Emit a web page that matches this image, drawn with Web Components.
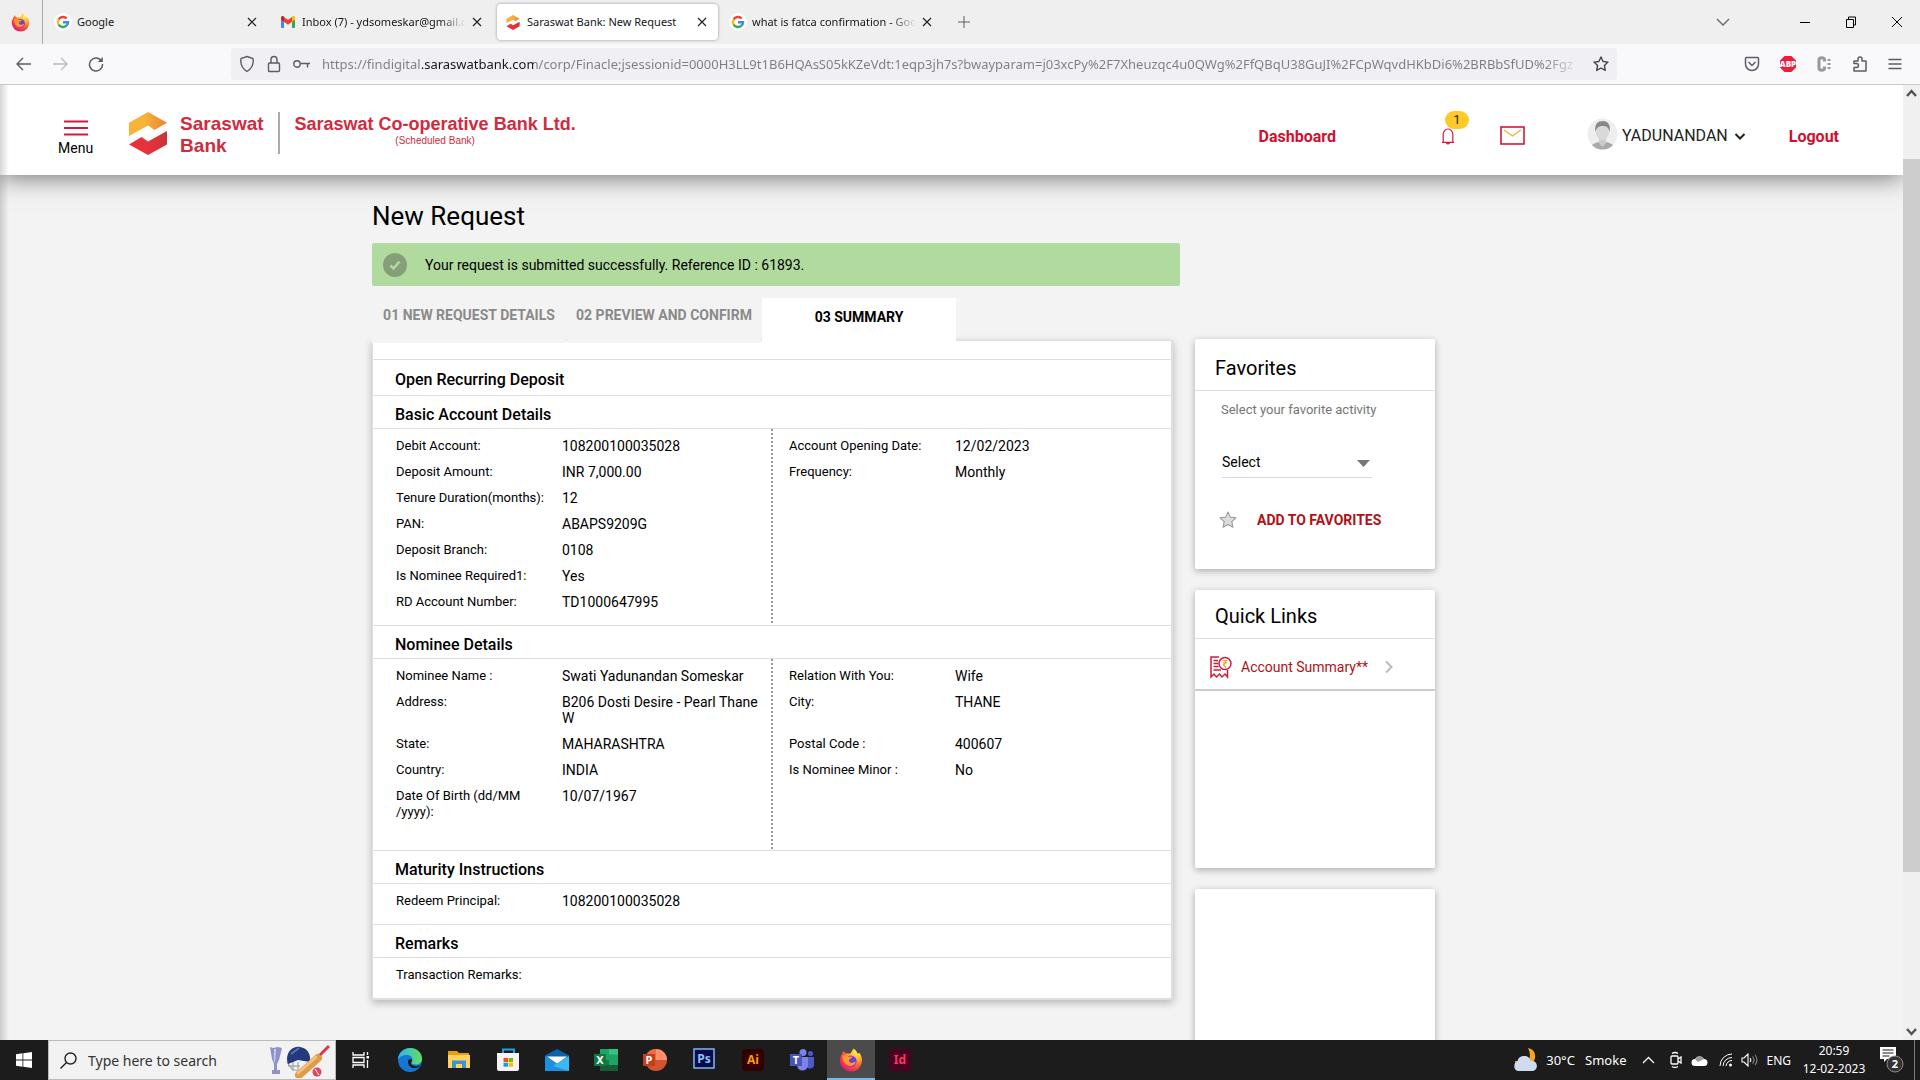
<!DOCTYPE html>
<html lang="en">
<head>
<meta charset="utf-8">
<title>Saraswat Bank: New Request</title>
<style>
html,body{height:100%}
body{margin:0;overflow:hidden;font-family:Roboto,"Liberation Sans",sans-serif;color:#000;background:#f3f3f3}
</style>
</head>
<body>
<desktop-shell>
  <browser-chrome slot="top"></browser-chrome>
  <web-page slot="page">
    <site-header></site-header>
    <request-page></request-page>
  </web-page>
  <task-bar slot="bottom"></task-bar>
</desktop-shell>

<script>
const define = (name, markup) => {
  const tpl = document.createElement('template');
  tpl.innerHTML = '<style>:host,*{box-sizing:border-box}button,input,select{font:inherit;color:inherit;background:none;border:0;margin:0;padding:0;outline:0}button{display:flex;align-items:center;justify-content:center;flex:none}svg{display:block;flex:none}a{text-decoration:none;color:inherit}</style>' + markup;
  customElements.define(name, class extends HTMLElement {
    constructor() {
      super();
      this.attachShadow({ mode: 'open' }).append(tpl.content.cloneNode(true));
    }
  });
};

const firefox = s => `<svg width="${s}" height="${s}" viewBox="0 0 24 24"><defs><radialGradient id="fa" cx=".75" cy=".15" r=".95"><stop offset="0" stop-color="#fff44f"/><stop offset=".35" stop-color="#ffb02e"/><stop offset=".65" stop-color="#ff5634"/><stop offset="1" stop-color="#e3117b"/></radialGradient></defs><path fill="url(#fa)" d="M14.500 0.500c2.500 1.500 3.500 3.500 4 5.200l1.700-1c1.800 2 2.800 4.600 2.800 7.600a11 11 0 0 1-22 .4C1 9.500 2 6.800 3.600 5L4 2.800l2.800 2.600c1.700-.4 3.200-.1 4.400.4 1-1.800 2.300-3.500 3.300-5.300z"/><circle cx="12" cy="13.200" r="5.600" fill="#7a3bd6"/><path fill="#ff9a2b" d="M3.500 8c2.500-1.400 5-.6 6.200.8l4-.3c-.5 1.900-2.700 1.900-3.600 3.200-.6 2 1 3.400 3 3.200 1.600-.2 2.300-1.300 3.700-1-1 3-4 4.600-7 3.900-3.800-.9-6-5-6.300-9.800z"/></svg>`;
const google = `<svg width="18" height="18" viewBox="0 0 18 18"><circle cx="9" cy="9" r="9" fill="#fff"/><g fill="none" stroke-width="2.400"><path stroke="#ea4335" d="M4.600 6.500A5 5 0 0 1 12.600 5.500"/><path stroke="#fbbc05" d="M4.600 11.500A5 5 0 0 1 4.600 6.500"/><path stroke="#34a853" d="M12.400 12.700A5 5 0 0 1 4.600 11.500"/><path stroke="#4285f4" d="M9 9.200h5A5 5 0 0 1 12.400 12.700"/></g></svg>`;
const gmail = `<svg width="18" height="18" viewBox="0 0 18 18"><path fill="#4285f4" d="M2 4.500l3 2.300V15H3a1 1 0 0 1-1-1z"/><path fill="#34a853" d="M16 4.500l-3 2.300V15h2a1 1 0 0 0 1-1z"/><path fill="#ea4335" d="M5 4l4 3 4-3v4.800l-4 3-4-3z"/><path fill="#c5221f" d="M2 5c0-2 1.800-2.500 3-1.400v5.200L2 6.600z"/><path fill="#fbbc04" d="M16 5c0-2-1.800-2.500-3-1.400v5.200l3-2.200z"/></svg>`;
const hex = (w, h) => `<svg width="${w}" height="${h}" viewBox="0 0 38 43"><defs><linearGradient id="hy"><stop offset=".4" stop-color="#f8b43a"/><stop offset="1" stop-color="#ee7f35"/></linearGradient><linearGradient id="hr"><stop offset=".5" stop-color="#e8313b"/><stop offset="1" stop-color="#c5353d"/></linearGradient></defs><path fill="url(#hy)" d="M19 0l19 10.800L25.500 18l-6.500-4.500L0 24V10.800z"/><path fill="url(#hr)" d="M0 32.500L12.500 25l6.500 4.500L38 19v13.500L19 43z"/></svg>`;

define('desktop-shell', `<style>
:host{display:flex;flex-direction:column;height:100vh}
.mid{flex:1;min-height:0;display:flex}
::slotted(web-page){flex:1;min-width:0}
</style><slot name="top"></slot><div class="mid"><slot name="page"></slot><page-scrollbar></page-scrollbar></div><slot name="bottom"></slot>`);

define('page-scrollbar', `<style>
:host{display:flex;flex-direction:column;width:17px;background:#f0f0f0}
svg{margin:4px auto}
.thumb{flex:712;background:#cdcdcd}.a{flex:57}.b{flex:151}
</style><svg width="11" height="9" viewBox="0 0 11 9"><path d="M1 7l4.500-5L10 7" fill="none" stroke="#555" stroke-width="2.500"/></svg>
<div class="a"></div><div class="thumb"></div><div class="b"></div>
<svg width="11" height="9" viewBox="0 0 11 9"><path d="M1 2l4.500 5L10 2" fill="none" stroke="#555" stroke-width="2.500"/></svg>`);

define('browser-tab', `<style>
:host{display:flex;align-items:center;width:225px;height:36px;padding:0 12px 0 9px;gap:5px;font-size:11px;line-height:18px}
:host([active]){width:221px;margin:0 2px;padding:0 10px 0 7px;background:#fff;border-radius:4px;box-shadow:0 0 3px rgba(0,0,0,.4)}
.t{flex:1;min-width:0;white-space:nowrap;overflow:hidden}
:host([long]) .t{-webkit-mask:linear-gradient(90deg,#000 84%,transparent)}
</style><slot name="icon"></slot><span class="t"><slot></slot></span><button aria-label="Close tab"><svg width="12" height="12" viewBox="0 0 12 12"><path d="M2 2l8 8M10 2l-8 8" stroke="#222" stroke-width="1.200"/></svg></button>`);

define('browser-chrome', `<style>
:host{display:block;font-family:"Noto Sans","Open Sans",sans-serif;color:#15141a}
.strip{display:flex;align-items:center;height:44px;background:#efefef;padding-right:16px}
.home{width:43px;height:44px;border-right:1px solid #aaa;margin-right:2px;padding-right:2px;display:flex;align-items:center;justify-content:center}
.plus{width:24px;height:24px;margin-left:7px}
.win{margin-left:auto;display:flex;align-items:center;gap:32px}
.bar{display:flex;align-items:center;height:41px;background:#f9f9fb;border-bottom:1px solid #c8c8cc;padding:0 17px 0 16px}
.nav{display:flex;gap:20px;width:215px}
.url{display:flex;align-items:center;flex:1;max-width:1386px;height:32px;background:#f0f0f4;border-radius:4px;padding:0 8px;gap:12px}
.url input{flex:1;min-width:0;font-size:13px;height:24px;color:transparent;background:linear-gradient(90deg,#7c7c84 100px,#15141a 100px 212px,#7c7c84 212px);-webkit-background-clip:text;background-clip:text;-webkit-mask:linear-gradient(90deg,#000 97%,transparent)}
.ext{margin-left:auto;display:flex;gap:18px;align-items:center}
i{display:block;width:18px;height:18px}
</style>
<div class="strip"><div class="home">${firefox(19)}</div>
<browser-tab><i slot="icon">${google}</i>Google</browser-tab>
<browser-tab long><i slot="icon">${gmail}</i>Inbox (7) - ydsomeskar@gmail.c</browser-tab>
<browser-tab active><i slot="icon" style="display:grid;place-items:center">${hex(14, 15)}</i>Saraswat Bank: New Request</browser-tab>
<browser-tab long><i slot="icon">${google}</i>what is fatca confirmation - Goo</browser-tab>
<button class="plus" aria-label="New tab"><svg width="12" height="12"><path d="M6 0v12M0 6h12" stroke="#5b5b66"/></svg></button>
<div class="win">
<button aria-label="List tabs" style="margin-right:36px"><svg width="14" height="14" viewBox="0 0 14 14"><path d="M1 4l6 6 6-6" fill="none" stroke="#666" stroke-width="1.300"/></svg></button>
<button aria-label="Minimise"><svg width="14" height="14"><path d="M2 7.500h10" stroke="#000"/></svg></button>
<button aria-label="Restore"><svg width="14" height="14"><path d="M2.500 4.500h7v8h-7zM4.500 4v-2h7v8h-2" fill="none" stroke="#000"/></svg></button>
<button aria-label="Close"><svg width="14" height="14"><path d="M2 2l10 10M12 2L2 12" stroke="#000"/></svg></button></div></div>
<div class="bar"><div class="nav">
<button aria-label="Back"><svg width="16" height="16" viewBox="0 0 16 16" fill="none" stroke="#5b5b66" stroke-width="1.400"><path d="M15 8H1.500M7 2L1 8l6 6"/></svg></button>
<button aria-label="Forward"><svg width="16" height="16" viewBox="0 0 16 16" fill="none" stroke="#bbb" stroke-width="1.400"><path d="M1 8h13.500M9 2l6 6-6 6"/></svg></button>
<button aria-label="Reload"><svg width="16" height="16" viewBox="0 0 16 16" fill="none" stroke="#5b5b66" stroke-width="1.500"><path d="M13.500 5A6.500 6.500 0 1 0 14.500 8"/><path d="M14.800 1v5h-5z" fill="#5b5b66" stroke="none"/></svg></button></div>
<div class="url">
<svg width="16" height="18" viewBox="0 0 16 18" fill="none" stroke="#5b5b66" stroke-width="1.400"><path d="M8 1.500l6 2c.8 5-1 10-6 13-5-3-6.800-8-6-13z"/></svg>
<svg width="14" height="18" viewBox="0 0 14 18" fill="none" stroke="#5b5b66" stroke-width="1.400"><rect x="1.500" y="8" width="11" height="8.500" rx="1"/><path d="M4 8V4.500a3 3 0 0 1 6 0V8"/></svg>
<svg width="17" height="16" viewBox="0 0 17 16" fill="none" stroke="#5b5b66" stroke-width="1.400"><circle cx="4" cy="8" r="3.200"/><path d="M7.500 7.500H17M14.500 7.500v4"/></svg>
<input aria-label="Address" value="https://findigital.saraswatbank.com/corp/Finacle;jsessionid=0000H3LL9t1B6HQAsS05kKZeVdt:1eqp3jh7s?bwayparam=j03xcPy%2F7Xheuzqc4u0QWg%2FfQBqU38GuJI%2FCpWqvdHKbDi6%2BRBbSfUD%2Fgz">
<svg width="16" height="16" viewBox="0 0 16 16" fill="none" stroke="#444" stroke-width="1.400" stroke-linejoin="round"><path d="M8 1l2.100 4.500 4.900.600-3.600 3.400.900 4.900L8 12l-4.300 2.400.900-4.900L1 6.100l4.900-.600z"/></svg></div>
<div class="ext">
<svg width="18" height="18" viewBox="0 0 18 18" fill="none" stroke="#5b5b66" stroke-width="1.500"><path d="M3.500 2.500h11a1 1 0 0 1 1 1V9a6.500 6.500 0 0 1-13 0V3.500a1 1 0 0 1 1-1zM5.500 7L9 10.500 12.500 7"/></svg>
<svg width="18" height="18" viewBox="0 0 18 18"><path fill="#f01c3c" d="M5.600 1h6.800L17 5.600v6.800L12.400 17H5.600L1 12.400V5.600z"/><text x="9" y="12" font-size="8" font-weight="800" text-anchor="middle" fill="#fff" font-family="Open Sans">ABP</text></svg>
<svg width="18" height="18" viewBox="0 0 18 18" fill="none" stroke="#999"><path stroke-width="3" d="M9.500 6.500V5C9.500 2 4 2 4 5v8C4 16 9.500 16 9.500 13v-1.500"/><path stroke-width="3" stroke-dasharray="2 2" d="M14 4v10"/></svg>
<svg width="18" height="18" viewBox="0 0 18 18" fill="none" stroke="#5b5b66" stroke-width="1.500"><path d="M3 6h4V4a2 2 0 0 1 4 0v2h4v10H3v-3.500h2.500a2 2 0 0 0 0-4H3z" stroke-linejoin="round"/></svg>
<svg width="16" height="16" viewBox="0 0 16 16"><path d="M1.500 3.500h13M1.500 8h13M1.500 12.500h13" stroke="#5b5b66" stroke-width="1.500"/></svg>
</div></div>`);

define('web-page', `<style>
:host{display:block;position:relative;overflow:hidden;background:#f3f3f3}
:host::after{content:"";position:absolute;z-index:5;inset:0 auto 0 0;width:9px;background:linear-gradient(90deg,rgba(0,0,0,.16),transparent)}
</style><slot></slot>`);

define('site-header', `<style>
:host{display:flex;align-items:center;height:90px;background:#fff;position:relative;z-index:2;box-shadow:0 2px 24px rgba(0,0,0,.55);padding:6px 64px 0 58px;font-size:16px;line-height:20px}
.menu{flex-direction:column;font-size:14px;line-height:18px;gap:3px;margin:10px 36px 0 0}
.logo{display:flex;align-items:center;gap:13px;font:bold 19px/22px "Liberation Sans",sans-serif;color:#d12b3e}
.logo div{padding:4px 14px 0 0;border-right:2px solid #aaa;height:42px;display:flex;align-items:center}
.full{font:bold 18px/22px "Liberation Sans",sans-serif;color:#d12b3e;margin-left:15px;text-align:center;padding-bottom:6px}
.full small{display:block;font-size:10px;line-height:12px;font-weight:normal}
nav{margin:8px 0 0 auto;display:flex;align-items:center;color:#d01030;font-weight:700}
.bell{position:relative;margin:-2px 45px 0 105px}
.bell span{position:absolute;left:4px;top:-16px;width:24px;height:18px;border-radius:9px;background:#ffc928;color:#222;font-size:13px;line-height:18px;text-align:center;font-weight:400}
.mail{margin-top:-4px}
.user{margin:-2px 43px 0 62px;color:#222;font-weight:400;gap:4px}
.user svg:first-child{margin-top:-4px}
.user svg:last-child{margin-left:2px}
</style>
<button class="menu"><svg width="24" height="16"><path d="M0 1.500h24M0 8h24M0 14.500h24" stroke="#d5173a" stroke-width="2"/></svg>Menu</button>
<div class="logo">${hex(38, 43)}<div>Saraswat<br>Bank</div></div>
<div class="full">Saraswat Co-operative Bank Ltd.<small>(Scheduled Bank)</small></div>
<nav><a href="#dashboard">Dashboard</a>
<button class="bell" aria-label="Notifications"><svg width="14" height="18" viewBox="0 0 14 18" fill="none" stroke="#d5173a" stroke-width="1.200"><path d="M1 15.400h12M2.200 15V7.500a4.800 5.500 0 0 1 9.600 0V15M5.500 16a1.600 1.300 0 0 0 3 0"/></svg><span>1</span></button>
<button class="mail" aria-label="Mail"><svg width="25" height="19" viewBox="0 0 25 19" fill="none"><rect x="1" y="1" width="23" height="17" stroke="#d5173a" stroke-width="1.600"/><path d="M4 4l8.500 6L21 4" stroke="#f5b335" stroke-width="1.400"/></svg></button>
<button class="user"><svg width="31" height="32" viewBox="0 0 31 32"><defs><clipPath id="av"><ellipse cx="15.500" cy="16" rx="15" ry="15.500"/></clipPath></defs><g clip-path="url(#av)"><path fill="#eee" d="M0 0h31v32H0z"/><path fill="#a9a9a9" d="M3 32c0-5 4-7 9-8h7c5 1 9 3 9 8z"/><path fill="#ccc" d="M12 19h7v6l-3.500 4-3.500-4z"/><ellipse cx="15.500" cy="14" rx="6.500" ry="8" fill="#d9d9d9"/><path fill="#888" d="M8.500 14C7 6 11 3 16 3s8 4 6.500 11c-1-5-3-6-7-6s-6 2-7 6z"/></g></svg>YADUNANDAN<svg width="12" height="12" viewBox="0 0 12 12"><path d="M1.500 4L6 8.500 10.500 4" fill="none" stroke="#222" stroke-width="2"/></svg></button>
<a href="#logout">Logout</a></nav>`);

define('detail-row', `<style>
:host{display:grid;grid-template-columns:1fr 1fr;font-size:14px;line-height:16px}
div{display:grid;grid-template-columns:166px 1fr;padding:5px 8px 5px 23px;min-height:26px}
div+div{padding-left:17px}
.l{font-size:13px;padding-right:35px}
</style><div><span class="l"><slot name="l"></slot></span><span><slot name="v"></slot></span></div>
<div><span class="l"><slot name="l2"></slot></span><span><slot name="v2"></slot></span></div>`);

define('detail-section', `<style>
:host{display:block}
h2{margin:0;padding:9px 22px 0;height:33px;border-bottom:1px solid #dedede;font-size:16px;line-height:20px;font-weight:500}
.b{padding:4px 0 10px;border-bottom:1px solid #dedede}
:host([tall]) .b{padding-bottom:25px}
:host([last]) .b{border:0}
:host([split]) .b{background:linear-gradient(#999 50%,transparent 50%) 50% 0/2px 4px repeat-y}
:host([bare]) .b{display:none}
:host([bare]) h2{height:36px;padding-top:10px}
</style><h2><slot name="title"></slot></h2><div class="b"><slot></slot></div>`);

define('side-card', `<style>
:host{display:block;background:#fff;border-radius:2px;box-shadow:0 2px 7px rgba(0,0,0,.3)}
h2{margin:0;padding:15px 20px 0;height:52px;border-bottom:1px solid #dedede;font-size:20px;line-height:28px;font-weight:400}
:host([compact]) h2{height:49px;padding-top:12px}
:host([blank]) h2{display:none}
</style><h2><slot name="title"></slot></h2><slot></slot>`);

define('step-tabs', `<style>
:host{display:flex;gap:1px;margin-bottom:-3px;position:relative;z-index:1;font-size:14px;line-height:20px;font-weight:700;color:#8a8a8a}
a{width:194px;height:45px;padding-top:7px;text-align:center;background:#f3f3f3}
a:last-child{background:#fff;color:#000;padding-top:9px}
</style><a href="#1">01 NEW REQUEST DETAILS</a><a href="#2">02 PREVIEW AND CONFIRM</a><a href="#3">03 SUMMARY</a>`);

const row = (l, v = '', l2 = '', v2 = '') => `<detail-row><span slot="l">${l}</span><span slot="v">${v}</span>${l2 ? `<span slot="l2" style="white-space:nowrap">${l2}</span><span slot="v2">${v2}</span>` : ''}</detail-row>`;

define('request-page', `<style>
:host{display:block;max-width:1159px;margin:0 auto;padding-top:24px}
h1{margin:0 0 10px;font-size:26px;line-height:34px;font-weight:400}
.ok{display:flex;align-items:center;gap:18px;max-width:808px;height:43px;margin-bottom:12px;padding-left:11px;background:#b1da9f;border-radius:2px;font-size:14px}
.cols{display:grid;grid-template-columns:801px 240px;gap:22px;align-items:start}
.panel{background:#fff;border:solid #dedede;border-width:1px 2px 2px 1px;box-shadow:0 3px 8px rgba(0,0,0,.25)}
.gap{height:19px;border-bottom:1px solid #dedede}
aside{display:flex;flex-direction:column;gap:21px;padding-top:41px}
.fav{height:178px;padding:11px 25px 0 26px}
label{display:block;font-size:13px;line-height:16px;color:#757575;margin-bottom:31px}
.sel{display:grid;width:151px}
.sel>*{grid-area:1/1}
.sel svg{justify-self:end;align-self:center;margin-right:2px;pointer-events:none}
select{appearance:none;display:block;width:150px;height:29px;margin-left:1px;padding-bottom:2px;border-bottom:1px solid #d8d8d8;font-size:14px}
.add{gap:20px;font-weight:700;font-size:14px;color:#b01116;margin:33px 0 0 -2px}
.ql{display:flex;align-items:center;height:52px;padding:6px 0 0 15px;gap:9px;font-size:14px;color:#b01116;border-bottom:2px solid #ccc}
</style>
<h1>New Request</h1>
<div class="ok" role="status"><svg width="24" height="24" viewBox="0 0 24 24"><circle cx="12" cy="12" r="12" fill="#879f78"/><path d="M7.500 12.500l3 3 6-7" fill="none" stroke="#b1da9f" stroke-width="2.500"/></svg><span>Your request is submitted successfully. Reference ID : 61893.</span></div>
<div class="cols"><main><step-tabs></step-tabs><div class="panel"><div class="gap"></div>
<detail-section bare><span slot="title">Open Recurring Deposit</span></detail-section>
<detail-section split><span slot="title">Basic Account Details</span>
${row('Debit Account:', '108200100035028', 'Account Opening Date:', '12/02/2023')}
${row('Deposit Amount:', 'INR 7,000.00', 'Frequency:', 'Monthly')}
${row('<span style="white-space:nowrap">Tenure Duration(months):</span>', '12')}
${row('PAN:', 'ABAPS9209G')}
${row('Deposit Branch:', '0108')}
${row('<span style="white-space:nowrap">Is Nominee Required1:</span>', 'Yes')}
${row('RD Account Number:', 'TD1000647995')}</detail-section>
<detail-section split tall><span slot="title">Nominee Details</span>
${row('Nominee Name :', 'Swati Yadunandan Someskar', 'Relation With You:', 'Wife')}
${row('Address:', 'B206 Dosti Desire - Pearl Thane W', 'City:', 'THANE')}
${row('State:', 'MAHARASHTRA', 'Postal Code :', '400607')}
${row('Country:', 'INDIA', 'Is Nominee Minor :', 'No')}
${row('Date Of Birth (dd/MM<wbr>/yyyy):', '10/07/1967')}</detail-section>
<detail-section><span slot="title">Maturity Instructions</span>${row('Redeem Principal:', '108200100035028')}</detail-section>
<detail-section last><span slot="title">Remarks</span>${row('Transaction Remarks:')}</detail-section>
</div></main>
<aside>
<side-card><span slot="title">Favorites</span><div class="fav"><label for="act">Select your favorite activity</label>
<div class="sel"><select id="act"><option>Select</option></select><svg width="13" height="7"><path d="M0 0h13L6.500 7z" fill="#777"/></svg></div>
<button class="add"><svg width="18" height="18" viewBox="0 0 17 17"><path d="M8.500 1l2.200 4.800 5.300.600-3.900 3.600 1 5.400-4.600-2.600-4.600 2.600 1-5.400L1 6.400l5.300-.600z" fill="#ddd" stroke="#999" stroke-linejoin="round"/></svg>ADD TO FAVORITES</button></div></side-card>
<side-card compact style="height:278px"><span slot="title">Quick Links</span>
<a class="ql" href="#summary"><svg width="22" height="23" viewBox="0 0 22 23" fill="none" stroke="#cf1b3c" stroke-width="1.500"><path d="M9 1H1v20l3-3 2.500 3L9.500 18l2.500 3 3-3 2.500 3v-7"/><path d="M3.500 4.500H8M3.500 7.500H8M3.500 10.500h5M3.500 14H11" stroke-width="1.300"/><circle cx="15" cy="7.500" r="6"/><path d="M12.500 4.500h5M12.500 6.700h5M12.800 8.500c4 0 3.500-4 .8-4M13 8.500l3.200 3" stroke="#f0a420" stroke-width="1.100"/></svg>Account Summary**<svg width="19" height="14" viewBox="0 0 19 14"><path d="M9 1.500L14.500 7 9 12.500" fill="none" stroke="#bbb" stroke-width="2"/></svg></a></side-card>
<side-card blank style="height:278px"></side-card>
</aside></div>`);

define('task-bar', `<style>
:host{display:flex;height:40px;background:#1c1c1c;color:#fff;font-family:"Noto Sans","Open Sans",sans-serif;font-size:14px;position:relative}
.start{width:48px}
.search{display:flex;align-items:center;width:288px;background:#f2f2f2;border:1px solid #bbb;padding:0 4px 0 11px;gap:11px}
.search input{flex:1;min-width:0;color:#333}
.search input::placeholder{color:#333;opacity:1}
.apps{display:flex;gap:1px;padding-left:1px}
.apps button{width:48px;height:40px}
.apps .on{background:#4b4b4b;border-bottom:2px solid #76b9ed;padding-top:2px}
.tray{margin-left:auto;display:flex;align-items:center;padding-right:5px}
.clock{font-size:12px;line-height:18px;text-align:center;width:72px}
.note{border-right:1px solid #777;height:40px;width:45px;padding-right:2px}
text{font-family:"Noto Sans",sans-serif;font-weight:700}
</style>
<button class="start" aria-label="Start"><svg width="16" height="16" viewBox="0 0 16 16" fill="#fff"><path d="M0 2.200l6.500-.9v6.300H0zM7.300 1.200L16 0v7.600H7.300zM0 8.400h6.500v6.300L0 13.800zM7.300 8.400H16V16l-8.700-1.200z"/></svg></button>
<div class="search"><svg width="17" height="17" viewBox="0 0 17 17" fill="none" stroke="#222" stroke-width="1.400"><circle cx="10.500" cy="6.500" r="5.500"/><path d="M6.500 10.500L.5 16.500"/></svg>
<input aria-label="Search" placeholder="Type here to search">
<svg width="62" height="36" viewBox="0 0 62 36"><path fill="#8d93c8" d="M1 5l3 1 5-1 4 1-3 12-2 4v6h3v4H3v-4h2v-6L3 17z"/><path fill="#c9cdf0" d="M5 7h2l-1 13H5z"/><path d="M18 20l5 7 9 3M19 24h12M24 19v10M29 20v10" stroke="#aaa" fill="none" stroke-width="1.300"/><path fill="#24397c" d="M18 18C18 9 24 4 31 5c8 1 11 8 10 15l-12-2-10 4z"/><path d="M22 12l8-6" stroke="#5770b8" stroke-width="2"/><path stroke="#e09a48" stroke-width="8" stroke-linecap="round" d="M30 33L49 16"/><path stroke="#f5c07e" stroke-width="3" stroke-linecap="round" d="M29 31L47 15"/><path stroke="#d83a4c" stroke-width="3" d="M51 13l9-9"/><circle cx="48" cy="30" r="4.500" fill="#e2465e"/><path d="M46 27l4 6" stroke="#fff"/></svg></div>
<div class="apps">
<button aria-label="Task view"><svg width="18" height="16" viewBox="0 0 18 16" fill="none" stroke="#fff" stroke-width="1.300"><path d="M1 0v3h11V0M1 16v-3h11v3M1 5.500h11v5H1zM15.500 0v3M15.500 8v8"/><path d="M14.500 4h2.500v2.500h-2.500z" fill="#fff" stroke="none"/></svg></button>
<button aria-label="Edge"><svg width="24" height="24" viewBox="0 0 24 24"><defs><linearGradient id="ed" x1="0" x2="1"><stop stop-color="#2fb4f2"/><stop offset="1" stop-color="#63e05a"/></linearGradient></defs><circle cx="12" cy="12" r="12" fill="#1577d3"/><path fill="url(#ed)" d="M0 12C0 5 5.500 0 12 0c7 0 12 5 12 10.500 0 4-3 6-6 6-2.500 0-4.500-1-4.500-2 0-.8 1-1 1-3 0-2.500-2.500-4.500-6-4.500C4 7 .5 9.500 0 12z"/><path fill="#1c1c1c" d="M14 12c0 2-1 2-1 3.300 0 2 3 3.200 6 2.700 1.500-.3 2.500-.8 3.500-1.500C21 20 18 20.500 15.500 20 11.500 19.500 9.500 16 10 13c.3-2 4-3 4-1z"/></svg></button>
<button aria-label="Explorer"><svg width="22" height="18" viewBox="0 0 22 18"><path fill="#e8a010" d="M0 0h9l2 2h10v5H0z"/><path fill="#ffd35c" d="M0 4h22v13H0z"/><path fill="#3c94d8" d="M4 17V9.500h14V17h-4v-4H8v4z"/></svg></button>
<button aria-label="Store"><svg width="24" height="24" viewBox="0 0 24 24"><path d="M7 6V1.500h11V6" fill="none" stroke="#22a0e8" stroke-width="2"/><path fill="#f3f3f3" d="M1 5h22v16a2 2 0 0 1-2 2H3a2 2 0 0 1-2-2z"/><path fill="#f25022" d="M7.500 10H12v4H7.500z"/><path fill="#7fba00" d="M12.600 10H17v4h-4.400z"/><path fill="#00a4ef" d="M7.500 14.700H12v4H7.500z"/><path fill="#ffb900" d="M12.600 14.700H17v4h-4.400z"/></svg></button>
<button aria-label="Mail"><svg width="24" height="22" viewBox="0 0 24 22"><path fill="#0a62ac" d="M0 6.500L12 0l12 6.500V12H0z"/><path fill="#fff" d="M2 7.500h20L12 15z"/><path fill="#1c90e0" d="M0 7l24 15H0z"/><path fill="#39baf2" d="M24 7L8 17l16 5z"/></svg></button>
<button aria-label="Excel"><svg width="24" height="22" viewBox="0 0 24 22"><path fill="#21a366" d="M6 0h18v22H6z"/><path fill="#33c481" d="M15 0h9v5.500h-9z"/><path fill="#107c41" d="M6 11h9v5H6z"/><path fill="#185c37" d="M6 16h18v6H6z"/><path fill="#0f7a40" d="M0 5h12v12H0z"/><text x="6" y="15" font-size="11" text-anchor="middle" fill="#fff">X</text></svg></button>
<button aria-label="PowerPoint"><svg width="24" height="22" viewBox="0 0 24 22"><circle cx="13" cy="11" r="11" fill="#d35230"/><path fill="#ff8f6b" d="M13 0a11 11 0 0 1 11 11H13z"/><path fill="#ed6c47" d="M2 11A11 11 0 0 1 13 0v11z"/><path fill="#c43e1c" d="M0 5h12v12H0z"/><text x="6" y="15" font-size="11" text-anchor="middle" fill="#fff">P</text></svg></button>
<button aria-label="Photoshop"><svg width="22" height="24" viewBox="0 0 22 24"><path fill="#0c0a4a" stroke="#7db8ee" stroke-width="1.500" d="M1 1h20v19H1z"/><text x="11" y="15" font-size="12" text-anchor="middle" fill="#8ac4f6">Ps</text></svg></button>
<button aria-label="Illustrator"><svg width="22" height="22" viewBox="0 0 22 22"><rect width="22" height="22" rx="4" fill="#330000"/><text x="11" y="15" font-size="12" text-anchor="middle" fill="#ff9a00">Ai</text></svg></button>
<button aria-label="Teams"><svg width="24" height="22" viewBox="0 0 24 22"><circle cx="13" cy="3.500" r="3.500" fill="#7b83eb"/><circle cx="20.500" cy="4.500" r="2.500" fill="#5059c9"/><path fill="#5059c9" d="M16 8h8v7a4 4 0 0 1-8 1z"/><path fill="#7b83eb" d="M7 8h11v8a5.500 5.500 0 0 1-11 0z"/><path fill="#4b53bc" d="M0 5h12v12H0z"/><text x="6" y="15" font-size="11" text-anchor="middle" fill="#fff">T</text></svg></button>
<button class="on" aria-label="Firefox">${firefox(24)}</button>
<button aria-label="InDesign"><svg width="22" height="22" viewBox="0 0 22 22"><rect width="22" height="22" rx="4" fill="#49021f"/><text x="11" y="15" font-size="12" text-anchor="middle" fill="#ff3366">Id</text></svg></button>
</div>
<div class="tray">
<svg width="25" height="24" viewBox="0 0 25 24"><path fill="#f5a623" d="M15 0c6 1 9 7 6 13h-6c3-4 2-9 0-13zM2 13h5v3H2z"/><path fill="#cfdcf0" d="M5 23a5 5 0 0 1-.5-9.500C5 9.500 8 8 11 8c4 0 6 2 6.500 5A5 5 0 0 1 20 23z"/></svg>
<span style="margin-left:8px;font-size:13px;white-space:pre">30°C&nbsp;&nbsp; Smoke</span>
<svg style="margin:0 14px 0 16px" width="13" height="8"><path d="M1 7l5.500-5.500L12 7" fill="none" stroke="#fff" stroke-width="1.300"/></svg>
<svg width="14" height="18" viewBox="0 0 14 18" fill="none" stroke="#fff" stroke-width="1.300"><rect x="2" y="5" width="7" height="8" rx="1"/><path d="M9 8l3-2v6l-3-2M3 2.500q3-2 6 0M3 15.500q3 2 6 0"/></svg>
<svg style="margin:0 11px 0 8px" width="17" height="12" viewBox="0 0 17 12"><path fill="#fff" d="M4 12a3.500 3.500 0 0 1 0-7 5 5 0 0 1 9 0 3.500 3.500 0 0 1 0 7z"/><path fill="#999" d="M4 5a5 5 0 0 1 9 0L7 8z"/></svg>
<svg width="14" height="14" viewBox="0 0 14 14" fill="none" stroke="#fff"><path d="M1 13A12 12 0 0 1 13 1M4 13A9 9 0 0 1 13 4.500M7 13a6 6 0 0 1 6-5.500"/><circle cx="11.500" cy="12" r="1.500" fill="#fff" stroke="none"/></svg>
<svg style="margin:0 8px" width="17" height="14" viewBox="0 0 17 14" fill="none" stroke="#fff" stroke-width="1.100"><path d="M1 5h2l4-4v12L3 9H1zM9 5q1.500 2 0 4"/><path stroke="#888" d="M11.500 3.500q3 3.500 0 7M14 2q4 5 0 10"/></svg>
<span style="font-size:12px;margin-right:7px">ENG</span>
<div class="clock">20:59<br>12-02-2023</div>
<button class="note" aria-label="Notifications"><svg width="26" height="26" viewBox="0 0 26 26"><path fill="#fff" d="M2 0h16v12H9l-3 3v-3H2z"/><path d="M4.500 3h11M4.500 6h11M4.500 9h7" stroke="#1c1c1c"/><circle cx="17" cy="17" r="8" fill="#333" stroke="#888"/><text x="17" y="21" font-size="11" text-anchor="middle" fill="#fff">2</text></svg></button>
</div>`);
</script>
</body>
</html>
